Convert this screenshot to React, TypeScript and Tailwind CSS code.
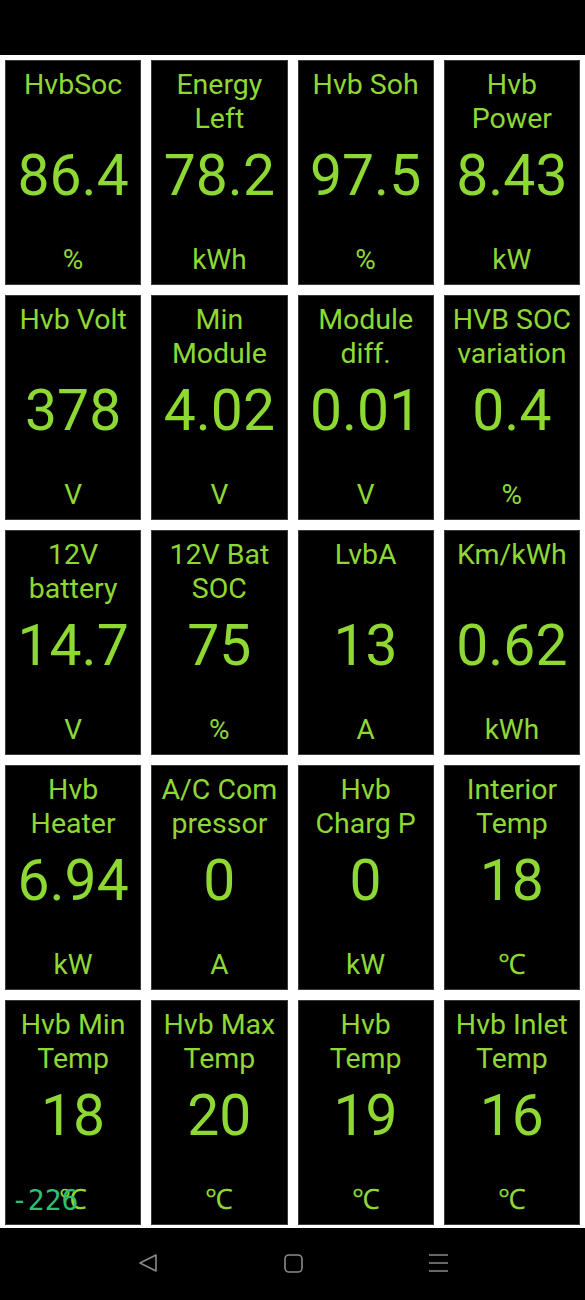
const cells: [string, string, string][] = [
  ['HvbSoc', '86.4', '%'],
  ['Energy\nLeft', '78.2', 'kWh'],
  ['Hvb Soh', '97.5', '%'],
  ['Hvb\nPower', '8.43', 'kW'],
  ['Hvb Volt', '378', 'V'],
  ['Min\nModule', '4.02', 'V'],
  ['Module\ndiff.', '0.01', 'V'],
  ['HVB SOC\nvariation', '0.4', '%'],
  ['12V\nbattery', '14.7', 'V'],
  ['12V Bat\nSOC', '75', '%'],
  ['LvbA', '13', 'A'],
  ['Km/kWh', '0.62', 'kWh'],
  ['Hvb\nHeater', '6.94', 'kW'],
  ['A/C Com\npressor', '0', 'A'],
  ['Hvb\nCharg P', '0', 'kW'],
  ['Interior\nTemp', '18', '℃'],
  ['Hvb Min\nTemp', '18', '℃'],
  ['Hvb Max\nTemp', '20', '℃'],
  ['Hvb\nTemp', '19', '℃'],
  ['Hvb Inlet\nTemp', '16', '℃'],
];

const Cell = ({ title, value, unit }: { title: string; value: string; unit: string }) => (
  <div className="h-[225px] bg-black border border-[#3a3a3a] flex flex-col items-center text-[#8ed834] font-['Roboto',sans-serif]">
    <div className="h-[76px] pt-[7px] text-center text-[28.5px] leading-[34px] w-full whitespace-pre">
      {title}
    </div>
    <div className="h-[76px] flex items-center justify-center text-[57px] leading-none">
      {value}
    </div>
    <div className="flex-1 flex items-end pb-[7px] text-[28px] leading-[34px]">{unit}</div>
  </div>
);

export default function App() {
  return (
    <div className="w-[585px] h-[1300px] bg-black flex flex-col">
      <div className="h-[55px]" />
      <div className="relative bg-white px-[5px] pt-[5px] pb-[3px] grid grid-cols-4 gap-[10px]">
        {cells.map(([t, v, u]) => (
          <Cell key={t} title={t} value={v} unit={u} />
        ))}
        <span className="absolute left-[11px] bottom-[13px] text-[#2fbf71] text-[28px] leading-none font-['DejaVu_Sans_Mono',monospace]">
          -226
        </span>
      </div>
      <div className="flex-1 flex items-center justify-center gap-[123px] pb-[3px]">
        <svg width="22" height="22" viewBox="0 0 22 22" fill="none" stroke="#8a8a8a" strokeWidth="1.6" strokeLinejoin="round">
          <path d="M19 3 L3 11 L19 19 Z" />
        </svg>
        <svg width="22" height="22" viewBox="0 0 22 22" fill="none" stroke="#8a8a8a" strokeWidth="1.6">
          <rect x="3" y="3" width="17" height="17" rx="4" />
        </svg>
        <svg width="22" height="22" viewBox="0 0 22 22" fill="none" stroke="#8a8a8a" strokeWidth="1.6">
          <path d="M2 3 H21 M2 11 H21 M2 19 H21" />
        </svg>
      </div>
    </div>
  );
}
